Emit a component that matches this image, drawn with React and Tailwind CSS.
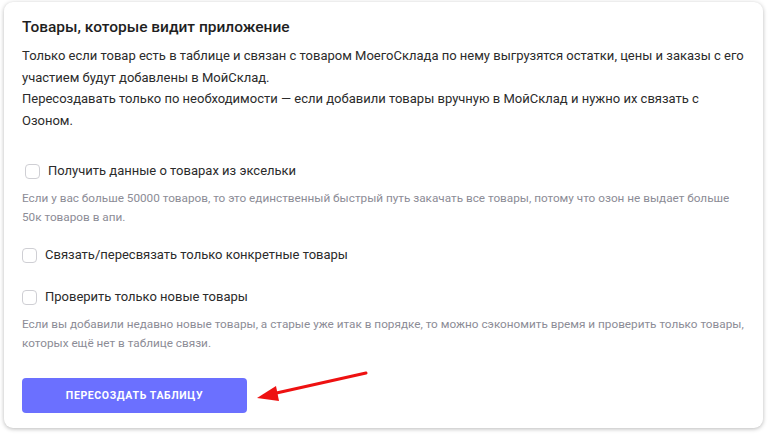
import React, { useState } from 'react';

// Чекбокс с подписью и необязательной подсказкой под ним
const Option = ({ label, hint, checked, onChange, indent, className = '' }) => (
    <div className={`flex flex-col ${className}`}>
        <label className={`flex items-center gap-[8px] cursor-pointer ${indent ? 'pl-[3px]' : ''}`}>
            <input
                type="checkbox"
                checked={checked}
                onChange={onChange}
                className="appearance-none w-[15px] h-[15px] rounded-[4px] border border-[#cfcfd4] bg-white checked:bg-[#6b70ff] checked:border-[#6b70ff]"
            />
            <span className="text-[13px] leading-[20px] text-[#2b2b2b]">{label}</span>
        </label>
        {hint && (
            <p className="mt-[8px] whitespace-nowrap text-[11.75px] leading-[19px] text-[#8c8c96]">{hint}</p>
        )}
    </div>
);

const App = () => {
    const [opts, setOpts] = useState({ excel: false, concrete: false, onlyNew: false });
    const toggle = (k) => setOpts((o) => ({ ...o, [k]: !o[k] }));

    return (
        <div className="w-[768px] h-[436px] bg-white pt-[2px] pl-[4px] font-['Roboto',sans-serif]">
            <div className="relative w-[759px] h-[426px] bg-white rounded-[9px] shadow-[0_1px_4px_rgba(0,0,0,0.28)] px-[18px] pt-[13px]">
                <h2 className="text-[15.5px] leading-[24px] font-medium text-[#1f1f1f]">Товары, которые видит приложение</h2>
                <p className="mt-[6px] whitespace-nowrap text-[13px] leading-[21.5px] text-[#2b2b2b]">
                    Только если товар есть в таблице и связан с товаром МоегоСклада по нему выгрузятся остатки, цены и заказы с его<br />
                    участием будут добавлены в МойСклад.<br />
                    Пересоздавать только по необходимости — если добавили товары вручную в МойСклад и нужно их связать с<br />
                    Озоном.
                </p>

                <div className="mt-[30px] flex flex-col">
                    <Option
                        indent
                        label="Получить данные о товарах из эксельки"
                        checked={opts.excel}
                        onChange={() => toggle('excel')}
                        hint={<>Если у вас больше 50000 товаров, то это единственный быстрый путь закачать все товары, потому что озон не выдает больше<br />50к товаров в апи.</>}
                    />
                    <Option
                        className="mt-[18px]"
                        label="Связать/пересвязать только конкретные товары"
                        checked={opts.concrete}
                        onChange={() => toggle('concrete')}
                    />
                    <Option
                        className="mt-[22px]"
                        label="Проверить только новые товары"
                        checked={opts.onlyNew}
                        onChange={() => toggle('onlyNew')}
                        hint={<>Если вы добавили недавно новые товары, а старые уже итак в порядке, то можно сэкономить время и проверить только товары,<br />которых ещё нет в таблице связи.</>}
                    />
                </div>

                <div className="mt-[25px] flex items-center">
                    <button
                        type="button"
                        className="w-[225px] h-[35px] rounded-[4px] bg-[#6b70ff] text-white text-[10.5px] font-bold tracking-[0.06em] uppercase"
                    >
                        Пересоздать таблицу
                    </button>
                </div>

                {/* красная стрелка-указатель поверх карточки */}
                <svg className="absolute left-[248px] top-[366px]" width="120" height="36" viewBox="0 0 120 36">
                    <line x1="114" y1="5" x2="20" y2="26" stroke="#ee1111" strokeWidth="3" strokeLinecap="round" />
                    <polygon points="5,30 24,18 27,33" fill="#ee1111" />
                </svg>
            </div>
        </div>
    );
};

export default App;
